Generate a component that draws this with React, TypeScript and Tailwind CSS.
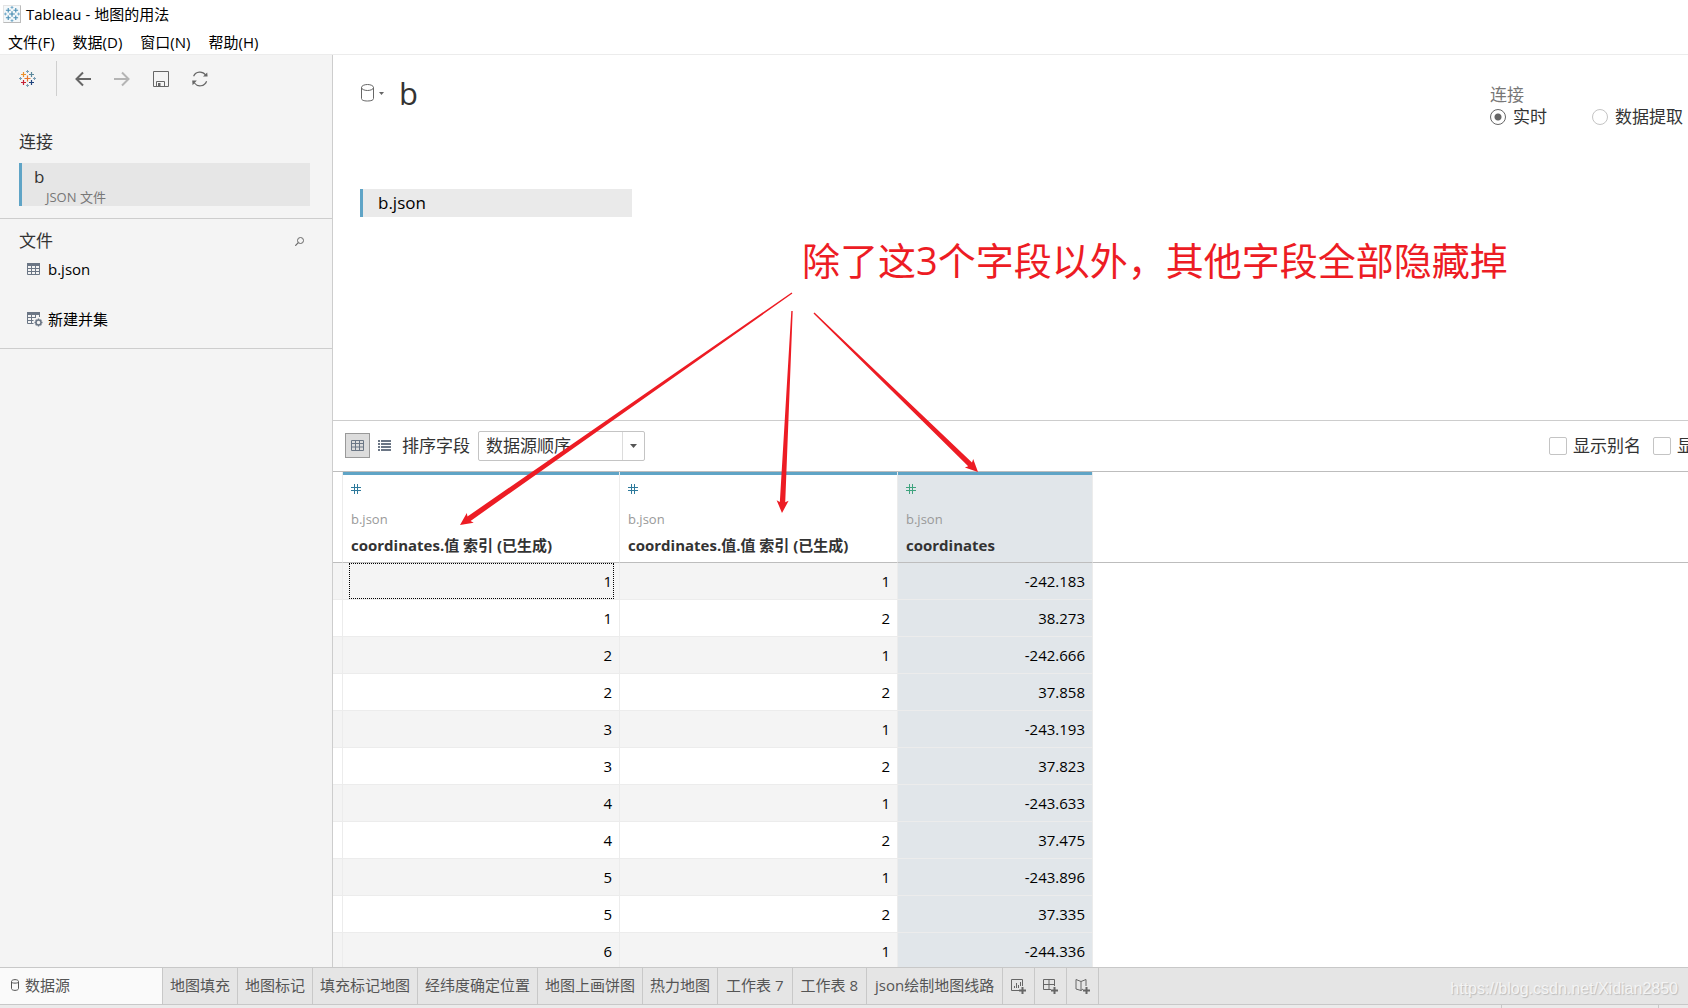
import React from 'react';
import clsx from 'clsx';

const rows = [
  ['1', '1', '-242.183'],
  ['1', '2', '38.273'],
  ['2', '1', '-242.666'],
  ['2', '2', '37.858'],
  ['3', '1', '-243.193'],
  ['3', '2', '37.823'],
  ['4', '1', '-243.633'],
  ['4', '2', '37.475'],
  ['5', '1', '-243.896'],
  ['5', '2', '37.335'],
  ['6', '1', '-244.336'],
];

const columns = [
  { name: 'coordinates.值 索引 (已生成)', selected: false },
  { name: 'coordinates.值.值 索引 (已生成)', selected: false },
  { name: 'coordinates', selected: true },
];

const sheets = ['地图填充', '地图标记', '填充标记地图', '经纬度确定位置', '地图上画饼图', '热力地图', '工作表 7', '工作表 8', 'json绘制地图线路'];

const LOGO_COLORS = ['#eb912c', '#59879b', '#c72035', '#1f447e', '#e8762c', '#7b9fb5'];
const LOGO_BLUE = ['#4a8fb5', '#4a8fb5', '#4a8fb5', '#4a8fb5', '#3f86ad', '#6fa8c6'];

const TableauLogo: React.FC<{ colors: string[]; size: number }> = ({ colors, size }) => (
  <svg width={size} height={size} viewBox="0 0 17 17" fill="none">
    <path d="M8.5 5.5v6M5.5 8.5h6" stroke={colors[4]} strokeWidth="1.2" />
    <path d="M4.5 2v5M2 4.5h5" stroke={colors[0]} strokeWidth="1.2" />
    <path d="M12.5 2v5M10 4.5h5" stroke={colors[1]} strokeWidth="1.2" />
    <path d="M4.5 10v5M2 12.5h5" stroke={colors[2]} strokeWidth="1.2" />
    <path d="M12.5 10v5M10 12.5h5" stroke={colors[3]} strokeWidth="1.2" />
    <path d="M8.5 0v3M7 1.5h3M8.5 14v3M7 15.5h3M1.5 7v3M0 8.5h3M15.5 7v3M14 8.5h3" stroke={colors[5]} />
  </svg>
);

const BackIcon = () => (
  <svg width="16" height="16" viewBox="0 0 16 16" fill="none" stroke="currentColor" strokeWidth="2">
    <path d="M1.5 8H16M8 1.5L1.5 8L8 14.5" />
  </svg>
);

const ForwardIcon = () => (
  <svg width="16" height="16" viewBox="0 0 16 16" fill="none" stroke="currentColor" strokeWidth="2">
    <path d="M0 8h14.5M8 1.5L14.5 8L8 14.5" />
  </svg>
);

const SaveIcon = () => (
  <svg width="16" height="16" viewBox="0 0 16 16" fill="none" stroke="#666">
    <path d="M.5 .5h15v15H.5z" />
    <path d="M3.5 15.5v-5h8v5" />
    <path d="M5 12h2.5v3.5H5z" fill="#666" stroke="none" />
  </svg>
);

const RefreshIcon = () => (
  <svg width="18" height="16" viewBox="0 0 18 16" fill="none" stroke="#666" strokeWidth="1.2">
    <path d="M2.6 5.2A7 7 0 0 1 14.6 4M15.6 10.2A7 7 0 0 1 3.4 12" />
    <path d="M12 5.6h4.6L16.2 1.6zM1.6 14.2L1.2 9.6h4.6z" fill="#666" stroke="none" />
  </svg>
);

const TableIcon: React.FC<{ gear?: boolean }> = ({ gear }) => (
  <svg width="16" height="15" viewBox={gear ? '0 0 16 15' : '0 -1 16 15'} fill="none" stroke="#6b7685">
    <path d="M0 0h13v3H0z" fill="#6b7685" stroke="none" />
    {gear ? (
      <>
        <path d="M.5 2v9.500h6M.5 5.500h8M.5 8.500h6M4.500 2v9.500M8.500 2v4M12.500 2v3" />
        <circle cx="11.500" cy="10.500" r="2.500" strokeWidth="1.500" />
        <path d="M11.500 6.500v1.500M11.500 13v1.500M7.500 10.500H9M14 10.500h1.500M8.700 7.700l1 1M13.300 12.300l1 1M14.300 7.700l-1 1M9.700 12.300l-1 1" strokeWidth="1.400" />
      </>
    ) : (
      <path d="M.5 2v9.500h12V2M.5 5.500h12M.5 8.500h12M4.500 2v9.500M8.500 2v9.500" />
    )}
  </svg>
);

const HashIcon: React.FC<{ color: string }> = ({ color }) => (
  <svg width="10" height="10" viewBox="0 0 10 10" fill="none" stroke={color}>
    <path d="M3.500 0v10M6.500 0v10M0 3.500h10M0 6.500h10" />
  </svg>
);

const Caret = () => (
  <svg width="7" height="4" viewBox="0 0 7 4" fill="#555">
    <path d="M0 0h7L3.500 4z" />
  </svg>
);

// tapered arrow, thin at the tail and thick at the head
const Arrow: React.FC<{ from: number[]; to: number[] }> = ({ from, to }) => {
  const dx = to[0] - from[0];
  const dy = to[1] - from[1];
  const len = Math.hypot(dx, dy);
  const point = (back: number, side: number) =>
    `${to[0] - (dx / len) * back - (dy / len) * side},${to[1] - (dy / len) * back + (dx / len) * side}`;
  const points = [
    point(len, 0.7), point(11, 2.7), point(12.5, 6), point(0, 0),
    point(12.5, -6), point(11, -2.7), point(len, -0.7),
  ];
  return <polygon points={points.join(' ')} fill="#ed1c24" />;
};

const Sidebar = () => (
  <aside className="w-[333px] shrink-0 border-r border-[#cdcdcd] bg-[#f4f4f4]">
    <div className="flex h-[47px] items-center pl-[19px]">
      <button aria-label="起始页"><TableauLogo colors={LOGO_COLORS} size={17} /></button>
      <div className="ml-5 h-[35px] w-px bg-[#cfcfcf]" />
      <button aria-label="后退" className="ml-[18px] text-[#666]"><BackIcon /></button>
      <button aria-label="前进" className="ml-[23px] text-[#b4b4b4]"><ForwardIcon /></button>
      <button aria-label="保存" className="ml-[23px]"><SaveIcon /></button>
      <button aria-label="刷新" className="ml-[22px]"><RefreshIcon /></button>
    </div>
    <div className="border-b border-[#cdcdcd] pt-7 pr-[22px] pb-3 pl-[19px]">
      <h2 className="text-[17px] leading-6 text-[#333]">连接</h2>
      <button className="mt-[9px] block h-[43px] w-full border-l-3 border-[#5fa4c6] bg-[#e6e6e6] text-left">
        <span className="block pl-3 text-[17px] leading-6 text-[#333]">b</span>
        <span className="block pl-6 text-[13px] leading-4 text-[#777]">JSON 文件</span>
      </button>
    </div>
    <div className="border-b border-[#cdcdcd] pt-2.5 pb-[17px]">
      <div className="flex items-center justify-between pr-7 pl-[19px]">
        <h2 className="text-[17px] leading-6 text-[#333]">文件</h2>
        <button aria-label="搜索">
          <svg width="9" height="9" viewBox="0 0 9 9" fill="none" stroke="#666">
            <circle cx="5.500" cy="3.500" r="3" />
            <path d="M3.300 5.700L.3 8.700" strokeWidth="1.200" />
          </svg>
        </button>
      </div>
      <button className="mt-1 flex items-center gap-[5px] pl-[27px] text-[15px] leading-6 text-black">
        <TableIcon /> b.json
      </button>
      <button className="mt-[26px] flex items-center gap-[5px] pl-[27px] text-[15px] leading-6 text-black">
        <TableIcon gear /> 新建并集
      </button>
    </div>
  </aside>
);

const radioClass =
  'size-4 appearance-none rounded-full border border-[#c4c4c4] bg-white checked:border-[#666] checked:bg-[radial-gradient(circle,#666_3px,white_4px)]';
const checkClass = 'size-[18px] shrink-0 appearance-none rounded-xs border border-[#c4c4c4] bg-white';

const DataSourceHeader = () => (
  <section className="flex h-[366px] shrink-0 justify-between border-b border-[#cdcdcd] pr-[5px] pl-[27px]">
    <div>
      <div className="mt-4 flex items-center pl-px">
        <button aria-label="数据源" className="flex items-center gap-[5px]">
          <svg width="13" height="18" viewBox="0 0 13 18" fill="none" stroke="#666">
            <ellipse cx="6.500" cy="3.500" rx="6" ry="3" />
            <path d="M.5 3.500v11c0 1.500 2 2.500 6 2.500s6-1 6-2.500v-11" />
          </svg>
          <svg width="5" height="3" viewBox="0 0 5 3" fill="#666"><path d="M0 0h5L2.500 3z" /></svg>
        </button>
        <h1 className="ml-[15px] text-[31px] leading-11 text-[#333]">b</h1>
      </div>
      <button className="mt-[74px] block h-7 w-[272px] border-l-3 border-[#5fa4c6] bg-[#eaeaea] pl-[15px] text-left text-[17px] leading-7 text-black">
        b.json
      </button>
    </div>
    <fieldset className="mt-[29px] text-[17px] leading-[22px] text-[#333]">
      <legend className="text-[#777]">连接</legend>
      <div className="flex gap-[45px]">
        <label className="flex items-center gap-[7px]">
          <input type="radio" name="mode" defaultChecked className={radioClass} />
          实时
        </label>
        <label className="flex items-center gap-[7px]">
          <input type="radio" name="mode" className={radioClass} />
          数据提取
        </label>
      </div>
    </fieldset>
  </section>
);

const GridToolbar = () => (
  <div className="flex h-[51px] shrink-0 items-center border-b border-[#bdbdbd] pb-px pl-3 text-[17px] leading-6 text-[#333]">
    <button aria-label="预览数据源" className="flex size-[25px] items-center justify-center border border-[#999] bg-[#dcdcdc]">
      <svg width="13" height="11" viewBox="0 0 13 11" fill="none" stroke="#6b7685">
        <path d="M.5 .5h12v10H.5zM.5 3.500h12M.5 7h12M4.500 .5v10M8.500 .5v10" />
      </svg>
    </button>
    <button aria-label="管理元数据" className="ml-2">
      <svg width="13" height="11" viewBox="0 0 13 11" fill="none" stroke="#6b7685" strokeWidth="2">
        <path d="M0 1h2M3 1h10M0 4h2M3 4h10M0 7h2M3 7h10M0 10h2M3 10h10" />
      </svg>
    </button>
    <label htmlFor="sort" className="ml-[11px]">排序字段</label>
    <div className="relative ml-2">
      <select id="sort" className="block h-[30px] w-[167px] appearance-none rounded-xs border border-[#c4c4c4] bg-white pl-[7px]">
        <option>数据源顺序</option>
      </select>
      <span className="pointer-events-none absolute inset-y-px right-px flex w-[22px] items-center justify-center border-l border-[#dcdcdc]">
        <Caret />
      </span>
    </div>
    <label className="ml-auto flex items-center gap-1.5 whitespace-nowrap">
      <input type="checkbox" className={checkClass} />
      显示别名
    </label>
    <label className="ml-3 flex items-center gap-1.5">
      <input type="checkbox" className={checkClass} />
      <span className="w-[11px]">显</span>
    </label>
  </div>
);

const DataGrid = () => (
  <div className="min-h-0 flex-1 overflow-hidden">
    <table className="w-full table-fixed border-separate border-spacing-0 text-[15px] leading-5">
      <colgroup>
        <col className="w-2.5" />
        <col className="w-[277px]" />
        <col className="w-[278px]" />
        <col className="w-[195px]" />
        <col />
      </colgroup>
      <thead>
        <tr>
          <td className="border-r border-b border-r-[#ececec] border-b-[#bdbdbd]" />
          {columns.map((col) => (
            <th
              key={col.name}
              className={clsx(
                'h-[91px] border-r border-b border-r-[#ececec] border-b-[#bdbdbd] p-0 text-left align-top font-bold whitespace-nowrap text-[#333]',
                col.selected && 'bg-[#e1e6ea]'
              )}
            >
              <div className="h-[3px] bg-[#5fa4c6]" />
              <div className="pt-[9px] pl-2">
                <HashIcon color={col.selected ? '#3fa37f' : '#2e7a9c'} />
                <div className="mt-[15px] text-[13px] leading-5 font-normal text-[#999]">b.json</div>
                <div className="mt-1.5">{col.name}</div>
              </div>
            </th>
          ))}
          <td className="border-b border-[#bdbdbd]" />
        </tr>
      </thead>
      <tbody className="text-right text-black">
        {rows.map((row, i) => (
          <tr key={i}>
            <td className={clsx('h-[37px] border-r border-b border-[#ececec] p-0', i % 2 === 0 && 'bg-[#f4f4f4]')} />
            {row.map((value, j) => (
              <td
                key={j}
                className={clsx(
                  'relative border-r border-b border-[#ececec] py-0 pr-[7px]',
                  j === 2 ? 'bg-[#e1e6ea]' : i % 2 === 0 && 'bg-[#f4f4f4]'
                )}
              >
                {value}
                {i === 0 && j === 0 && (
                  <span className="absolute top-0 right-[5px] bottom-0 left-1.5 border border-dotted border-black" />
                )}
              </td>
            ))}
            <td />
          </tr>
        ))}
      </tbody>
    </table>
  </div>
);

const newSheetIcons = [
  { label: '新建工作表', d: 'M10 11.500H.5v-11h11V7M3.500 9V7M5.500 9V4M7.500 9V6M9.500 7V3' },
  { label: '新建仪表板', d: 'M8 10.500H.5v-10h11V7M.5 5.500h11M6 .5v10' },
  { label: '新建故事', d: 'M8 10L6 11.500L1 10V.500L6 2.500L11 .500V7M6 2.500v9' },
];

const SheetTabs = () => (
  <footer className="shrink-0 bg-[#ebebeb]">
    <nav className="flex h-[38px] border-y border-[#c8c8c8] bg-[#e5e5e5] text-[15px] leading-8 text-[#555]">
      <button className="flex w-[163px] items-center gap-1.5 border-r border-[#c8c8c8] bg-[#fafafa] pb-0.5 pl-[11px]">
        <svg width="8" height="12" viewBox="0 0 8 12" fill="none" stroke="#555">
          <path d="M.5 2.500C.5 0 7.500 0 7.500 2.500v7c0 2.500-7 2.500-7 0zM.5 3c0 1.500 7 1.500 7 0" />
        </svg>
        数据源
      </button>
      {sheets.map((name) => (
        <button
          key={name}
          className={clsx('border-r border-[#c8c8c8] pb-0.5 whitespace-nowrap', /\w/.test(name) ? 'px-2' : 'px-[7px]')}
        >
          {name}
        </button>
      ))}
      {newSheetIcons.map((icon) => (
        <button key={icon.label} aria-label={icon.label} className="flex w-8 items-center justify-center border-r border-[#c8c8c8]">
          <svg width="15" height="15" viewBox="0 0 15 15" fill="none" stroke="#666">
            <path d={icon.d} />
            <path d="M11.500 8v7M8 11.500h7" strokeWidth="2" />
          </svg>
        </button>
      ))}
    </nav>
    <div className="flex h-[3px] justify-end pr-[29px]">
      <div className="w-[158px] border-x border-[#c8c8c8]" />
    </div>
  </footer>
);

const App: React.FC = () => (
  <div className="relative flex h-screen flex-col overflow-hidden bg-white font-['Open_Sans','Noto_Sans_CJK_SC',sans-serif]">
    <header className="shrink-0 border-b border-[#ececec] text-black">
      <div className="flex h-7 items-center gap-[5px] pl-[3px] text-[15px]">
        <span className="border border-[#e4e4e4] border-r-[#bbb] border-b-[#bbb] bg-[#f4f8fa]">
          <TableauLogo colors={LOGO_BLUE} size={16} />
        </span>
        Tableau - 地图的用法
      </div>
      <nav className="flex h-[26px] gap-[18px] pl-2 text-[15px] leading-7">
        <button>文件(F)</button>
        <button>数据(D)</button>
        <button>窗口(N)</button>
        <button>帮助(H)</button>
      </nav>
    </header>
    <div className="flex min-h-0 flex-1">
      <Sidebar />
      <main className="flex min-w-0 flex-1 flex-col">
        <DataSourceHeader />
        <GridToolbar />
        <DataGrid />
      </main>
    </div>
    <SheetTabs />
    <svg className="pointer-events-none absolute inset-0 size-full">
      <Arrow from={[792, 293]} to={[460, 525]} />
      <Arrow from={[792, 311]} to={[782, 513]} />
      <Arrow from={[814, 313]} to={[978, 472]} />
    </svg>
    <p className="absolute top-[234px] left-[802px] text-[38px] leading-[52px] whitespace-nowrap text-[#ed1c24]">
      除了这3个字段以外，其他字段全部隐藏掉
    </p>
    <p className="absolute right-2.5 bottom-[9px] font-['Liberation_Sans',sans-serif] text-base leading-5 text-[#f4f4f4] [text-shadow:1px_1px_1px_#bbb]">
      https://blog.csdn.net/Xidian2850
    </p>
  </div>
);

export default App;
